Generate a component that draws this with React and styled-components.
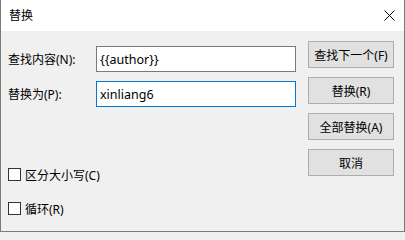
import React from "react";
import styled, { createGlobalStyle } from "styled-components";

const Global = createGlobalStyle`
  html, body { margin: 0; padding: 0; background: #f0f0f0; }
  * { box-sizing: border-box; }
`;

const FONT = `"Noto Sans", "Noto Sans CJK SC", sans-serif`;

const Window = styled.div`
  width: 405px;
  height: 232px;
  display: flex;
  flex-direction: column;
  background: #f0f0f0;
  border: 1px solid #7a7a7a;
  border-top: none;
  font-family: ${FONT};
  font-size: 12px;
  color: #000;
  overflow: hidden;
`;

const TitleBar = styled.div`
  height: 31px;
  flex: none;
  display: flex;
  align-items: center;
  justify-content: space-between;
  background: #fff;
  padding: 0 0 0 8px;
`;

const Title = styled.span`
  font-size: 12px;
  line-height: 1;
`;

const Close = styled.div`
  width: 30px;
  height: 31px;
  display: flex;
  align-items: center;
  justify-content: center;
  margin-right: 0;
`;

const Body = styled.div`
  flex: 1;
  display: flex;
  padding: 10px 10px 0 7px;
`;

const LeftPane = styled.div`
  flex: 1;
  display: flex;
  flex-direction: column;
`;

const Fields = styled.div`
  display: flex;
  flex-direction: column;
  gap: 9px;
  margin-top: 5px;
`;

const FieldRow = styled.div`
  display: flex;
  align-items: center;
  height: 26px;
`;

const Label = styled.label`
  width: 88px;
  flex: none;
  white-space: nowrap;
`;

const Input = styled.div`
  width: 200px;
  height: 26px;
  border: 1px solid ${(p) => (p.$focused ? "#0078d7" : "#7a7a7a")};
  background: #fff;
  display: flex;
  align-items: center;
  padding-left: 3px;
  font-size: 12.5px;
`;

const Checks = styled.div`
  display: flex;
  flex-direction: column;
  gap: 21px;
  margin-top: 61px;
`;

const CheckRow = styled.div`
  display: flex;
  align-items: center;
  height: 13px;
  gap: 4px;
  white-space: nowrap;
`;

const Box = styled.span`
  width: 13px;
  height: 13px;
  flex: none;
  border: 1px solid #333;
  background: #fff;
`;

const Buttons = styled.div`
  width: 86px;
  display: flex;
  flex-direction: column;
  gap: 9px;
`;

const Button = styled.button`
  width: 86px;
  height: 27px;
  background: #e1e1e1;
  border: 1px solid #adadad;
  font-family: ${FONT};
  font-size: 12px;
  color: #000;
  padding: 0;
  display: flex;
  align-items: center;
  justify-content: center;
`;

export default function App() {
  return (
    <>
      <Global />
      <Window>
        <TitleBar>
          <Title>替换</Title>
          <Close>
            <svg width="11" height="11" viewBox="0 0 11 11">
              <path d="M0.5 0.5 L10.5 10.5 M10.5 0.5 L0.5 10.5" stroke="#000" strokeWidth="1" />
            </svg>
          </Close>
        </TitleBar>
        <Body>
          <LeftPane>
            <Fields>
              <FieldRow>
                <Label>查找内容(N):</Label>
                <Input>{"{{author}}"}</Input>
              </FieldRow>
              <FieldRow>
                <Label>替换为(P):</Label>
                <Input $focused>xinliang6</Input>
              </FieldRow>
            </Fields>
            <Checks>
              <CheckRow>
                <Box />
                区分大小写(C)
              </CheckRow>
              <CheckRow>
                <Box />
                循环(R)
              </CheckRow>
            </Checks>
          </LeftPane>
          <Buttons>
            <Button>查找下一个(F)</Button>
            <Button>替换(R)</Button>
            <Button>全部替换(A)</Button>
            <Button>取消</Button>
          </Buttons>
        </Body>
      </Window>
    </>
  );
}
